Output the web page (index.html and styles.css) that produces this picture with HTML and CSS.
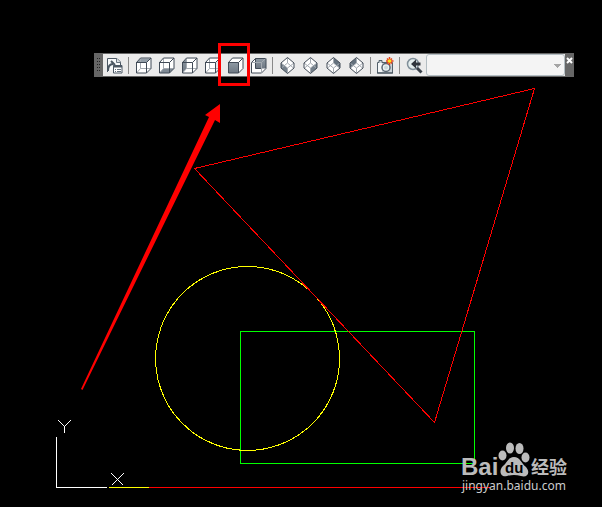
FILE: index.html
```html
<!DOCTYPE html>
<html lang="en">
<head>
<meta charset="utf-8">
<title>Drawing</title>
<link rel="stylesheet" href="styles.css">
</head>
<body>
<svg class="layer" role="img" aria-label="Model space">
  <g class="geometry">
    <path class="green" d="M240.500 331.500H474.500V463.500H240.500Z"/>
    <path class="yellow" d="M309 290A92 92 0 1 0 316 297"/>
    <path class="red" d="M194.500 168.500L534.500 88.500L434.500 422.500Z"/>
    <path class="red" d="M149 487.500H490"/>
    <path class="yellow" d="M109 487.500H149"/>
    <path class="white" d="M56.500 437V487.500H107M58.500 420.500L64.500 426.500L70.500 420.500M64.500 426.500V433M111.500 473.500L123.500 485.500M123.500 473.500L111.500 485.500"/>
  </g>
</svg>

<svg class="defs" aria-hidden="true">
  <defs>
    <linearGradient id="shade" x1="0" y1="0" x2="0" y2="1">
      <stop offset="0" stop-color="#8e99a3"/><stop offset="1" stop-color="#6d7782"/>
    </linearGradient>
    <path id="cube" fill="#fff" d="M1.500 5.500L5.500 1.500H16V12L12 16H1.500Z"/>
    <path id="edges" class="edge" d="M1 5.500H11.500V16H1.500V5.500L5.500 1H16V11.500L11.500 16M11.500 5.500L16 1"/>
    <path id="hidden" class="hidden" d="M5.500 1.500V11.500H16M5.500 11.500L1.500 16"/>
    <path id="gem" fill="#fff" d="M7 .5L13.500 6V11L7 16.500L.5 11V6Z"/>
    <path id="gemline" class="edge" d="M7 .5L13.500 6V11L7 16.500L.5 11V6Z"/>
  </defs>
</svg>

<div class="toolbar" role="toolbar" aria-label="View">
  <span class="grip"></span>
  <button type="button" aria-label="Named views"><svg class="icon" viewBox="0 0 17 17">
    <path fill="#f8fafb" stroke="#4c5864" d="M1.500 15V1.500H11L14.500 5V8"/><path fill="#dce1e5" stroke="#687480" d="M10.500 1.500V5.500H14.500"/>
    <path fill="none" stroke="#4c5864" stroke-width="2" d="M2 14C2 9 4 7 7 7M5 4L9 8"/>
    <path fill="#fff" stroke="#4c5864" d="M7.500 8.500H16V16H7.500Z"/><path stroke="#4c5864" stroke-width="2" d="M7 9.500H16"/><path stroke="#65717e" d="M9 12.500H10M11 12.500H15M9 14.500H10M11 14.500H15"/></svg></button>
  <span class="sep"></span>
  <button type="button" aria-label="Top"><svg class="icon" viewBox="0 0 17 17"><use href="#cube"/><path fill="#929da7" d="M1.500 5.500L5.500 1.500H16L11.500 5.500Z"/><use href="#hidden"/><use href="#edges"/></svg></button>
  <button type="button" aria-label="Bottom"><svg class="icon" viewBox="0 0 17 17"><use href="#cube"/><path fill="#7d8893" d="M1.500 16L5.500 11.500H16L11.500 16Z"/><use href="#hidden"/><use href="#edges"/></svg></button>
  <button type="button" aria-label="Left"><svg class="icon" viewBox="0 0 17 17"><use href="#cube"/><path fill="url(#shade)" d="M1.500 5.500L5.500 1.500V11.500L1.500 16Z"/><use href="#hidden"/><use href="#edges"/></svg></button>
  <button type="button" aria-label="Right"><svg class="icon" viewBox="0 0 17 17"><use href="#cube"/><path fill="#dfe3e6" d="M11.500 5.500L16 1.500V11.500L11.500 16Z"/><use href="#hidden"/><use href="#edges"/></svg></button>
  <button type="button" aria-label="Front"><svg class="icon" viewBox="0 0 17 17"><use href="#cube"/><path fill="url(#shade)" d="M1.500 5.500H11.500V16H1.500Z"/><use href="#edges"/></svg></button>
  <button type="button" aria-label="Back"><svg class="icon" viewBox="0 0 17 17"><use href="#cube"/><path fill="url(#shade)" d="M5.500 1.500H16V11.500H5.500Z"/><path class="edge" d="M5.500 1.500H16V11.500L11.500 16H1.500V5.500L5.500 1.500V11.500H11.500"/><path class="hidden" d="M2 5.500H11.500V15.500M11.500 5.500L15.500 1.500"/></svg></button>
  <span class="sep"></span>
  <button type="button" aria-label="SW isometric"><svg class="gem" viewBox="0 0 14 17"><use href="#gem"/><path fill="#74808b" d="M.5 6L7 11V16.500L.5 11Z"/><path class="hidden" d="M.5 6L7 11L13.500 6M7 11V16M7 1V6L1 11M7 6L13 11"/><use href="#gemline"/></svg></button>
  <button type="button" aria-label="SE isometric"><svg class="gem" viewBox="0 0 14 17"><use href="#gem"/><path fill="#74808b" d="M13.500 6L7 11V16.500L13.500 11Z"/><path class="hidden" d="M.5 6L7 11L13.500 6M7 11V16M7 1V6L1 11M7 6L13 11"/><use href="#gemline"/></svg></button>
  <button type="button" aria-label="NE isometric"><svg class="gem" viewBox="0 0 14 17"><use href="#gem"/><path fill="#65727e" d="M7 .5L13.500 6V11L7 6Z"/><path class="hidden" d="M.5 6L7 11L13.500 6M7 11V16M7 1V6L1 11M7 6L13 11"/><use href="#gemline"/></svg></button>
  <button type="button" aria-label="NW isometric"><svg class="gem" viewBox="0 0 14 17"><use href="#gem"/><path fill="#65727e" d="M7 .5L.5 6V11L7 6Z"/><path class="hidden" d="M.5 6L7 11L13.500 6M7 11V16M7 1V6L1 11M7 6L13 11"/><use href="#gemline"/></svg></button>
  <span class="sep"></span>
  <button type="button" aria-label="Create camera"><svg class="icon" viewBox="0 0 17 17">
    <path fill="#cbd2d7" stroke="#53606b" d="M.5 5.500H2V3.500H5V5.500H15.500V16H.5Z"/><path fill="#f4f6f7" d="M1 6H5V15H1Z"/><path stroke="#414c57" d="M0 16H16"/>
    <circle cx="9" cy="10.500" r="4" fill="#edf4f5" stroke="#5b6874" stroke-width="1.500"/><circle cx="9" cy="10.500" r="2" fill="#cbd9dc"/>
    <path stroke="#e5431c" stroke-width="1.500" d="M12.500 0V8M9 4H16.500M10 1.500L15 6.500M15 1.500L10 6.500"/><circle cx="12.500" cy="4" r="1.800" fill="#ffe51b"/></svg></button>
  <span class="sep"></span>
  <button type="button" aria-label="Previous view"><svg class="icon" viewBox="0 0 17 17">
    <circle cx="7" cy="7" r="5.500" fill="#e4eeee" stroke="#81909a" stroke-width="1.500"/><path stroke="#394149" stroke-width="3" d="M11 11L15.500 15.500"/><path fill="#30363d" d="M5 7L10 2.500V5.500H14.500V8.500H10V11.500Z"/></svg></button>
  <select class="views" aria-label="View control"><option></option></select>
  <button type="button" class="close" aria-label="Close"><svg class="x" viewBox="0 0 7 7"><path stroke="#fff" stroke-width="2" d="M1 1L6 6M6 1L1 6"/></svg></button>
</div>

<svg class="layer overlay" aria-hidden="true">
  <path fill="none" stroke="#f00" stroke-width="3" d="M219.500 44.500H248.500V84.500H219.500Z"/>
  <path fill="#f00" d="M220 104V123L215 120L82.500 390L81 389L209 117L205 115Z"/>
  <g class="mark">
    <text class="brand" x="461" y="475">Bai</text>
    <ellipse cx="502.500" cy="455.500" rx="4" ry="5"/><ellipse cx="510" cy="448" rx="4" ry="5.500"/><ellipse cx="519.500" cy="448.500" rx="4" ry="5.500"/><ellipse cx="525.500" cy="457.500" rx="4" ry="5"/>
    <path d="M514 457C520 457 521 463 526 467C531 473 527 478 521 476C516 474.500 512 474.500 507 476C501 478 498 471 503 466C507 463 508 457 514 457Z"/>
    <text class="du" x="505" y="473">du</text>
    <text class="han" x="531" y="474">经验</text>
    <text class="site" x="462" y="490">jingyan.baidu.com</text>
  </g>
</svg>
</body>
</html>
```

FILE: styles.css
```css
* { box-sizing: border-box; }
html, body { height: 100%; }
body {
  margin: 0;
  overflow: hidden;
  background: #000;
  font-family: "Liberation Sans", sans-serif;
}
.layer { position: absolute; inset: 0; width: 100%; height: 100%; }
.overlay { pointer-events: none; }
.defs { position: absolute; width: 0; height: 0; }

.geometry { fill: none; stroke-width: 1; shape-rendering: crispEdges; }
.green { stroke: #0f0; }
.yellow { stroke: #ff0; }
.red { stroke: #f00; }
.white { stroke: #fff; }

/* Floating toolbar */
.toolbar {
  position: absolute;
  top: 53px;
  left: 94px;
  right: 28px;
  display: flex;
  height: 24px;
  border: 1px solid #666;
  background: #ebebeb;
}
.grip {
  width: 8px;
  background:
    repeating-linear-gradient(#222 0 1px, transparent 1px 3px) 2px 4px / 1px 14px no-repeat,
    repeating-linear-gradient(#222 0 1px, transparent 1px 3px) 4px 4px / 1px 14px no-repeat,
    #666;
}
button {
  display: flex;
  align-items: center;
  justify-content: center;
  width: 23px;
  padding: 0;
  border: 0;
  background: none;
}
.icon { width: 17px; height: 17px; fill: none; }
.gem { width: 15px; height: 17px; fill: none; }
.edge { fill: none; stroke: #414b57; stroke-width: 1; }
.hidden { fill: none; stroke: #a4aab1; stroke-width: 1; }
.sep { width: 1px; margin: 3px 3px 2px 2px; background: #888; }
.views {
  flex: 1;
  min-width: 0;
  appearance: none;
  border: 1px solid #b3bdc2;
  border-radius: 3px;
  background:
    linear-gradient(#a5a5a5, #a5a5a5) right 3px top 9px / 7px 1px no-repeat,
    linear-gradient(#a5a5a5, #a5a5a5) right 4px top 10px / 5px 1px no-repeat,
    linear-gradient(#a5a5a5, #a5a5a5) right 5px top 11px / 3px 1px no-repeat,
    linear-gradient(#a5a5a5, #a5a5a5) right 6px top 12px / 1px 1px no-repeat,
    #f4f4f4;
}
.close { width: 8px; align-items: flex-start; padding-top: 3px; background: #666; }
.x { width: 7px; height: 7px; }

/* Site mark */
.mark { fill: #bbb; }
.brand { font: bold 24px "Liberation Sans", sans-serif; }
.du { font: bold 15px "Liberation Sans", sans-serif; fill: #000; }
.han { font: bold 18px "Noto Sans CJK SC", sans-serif; }
.site { font: 12px "Noto Sans", sans-serif; fill: #ccc; }
```
